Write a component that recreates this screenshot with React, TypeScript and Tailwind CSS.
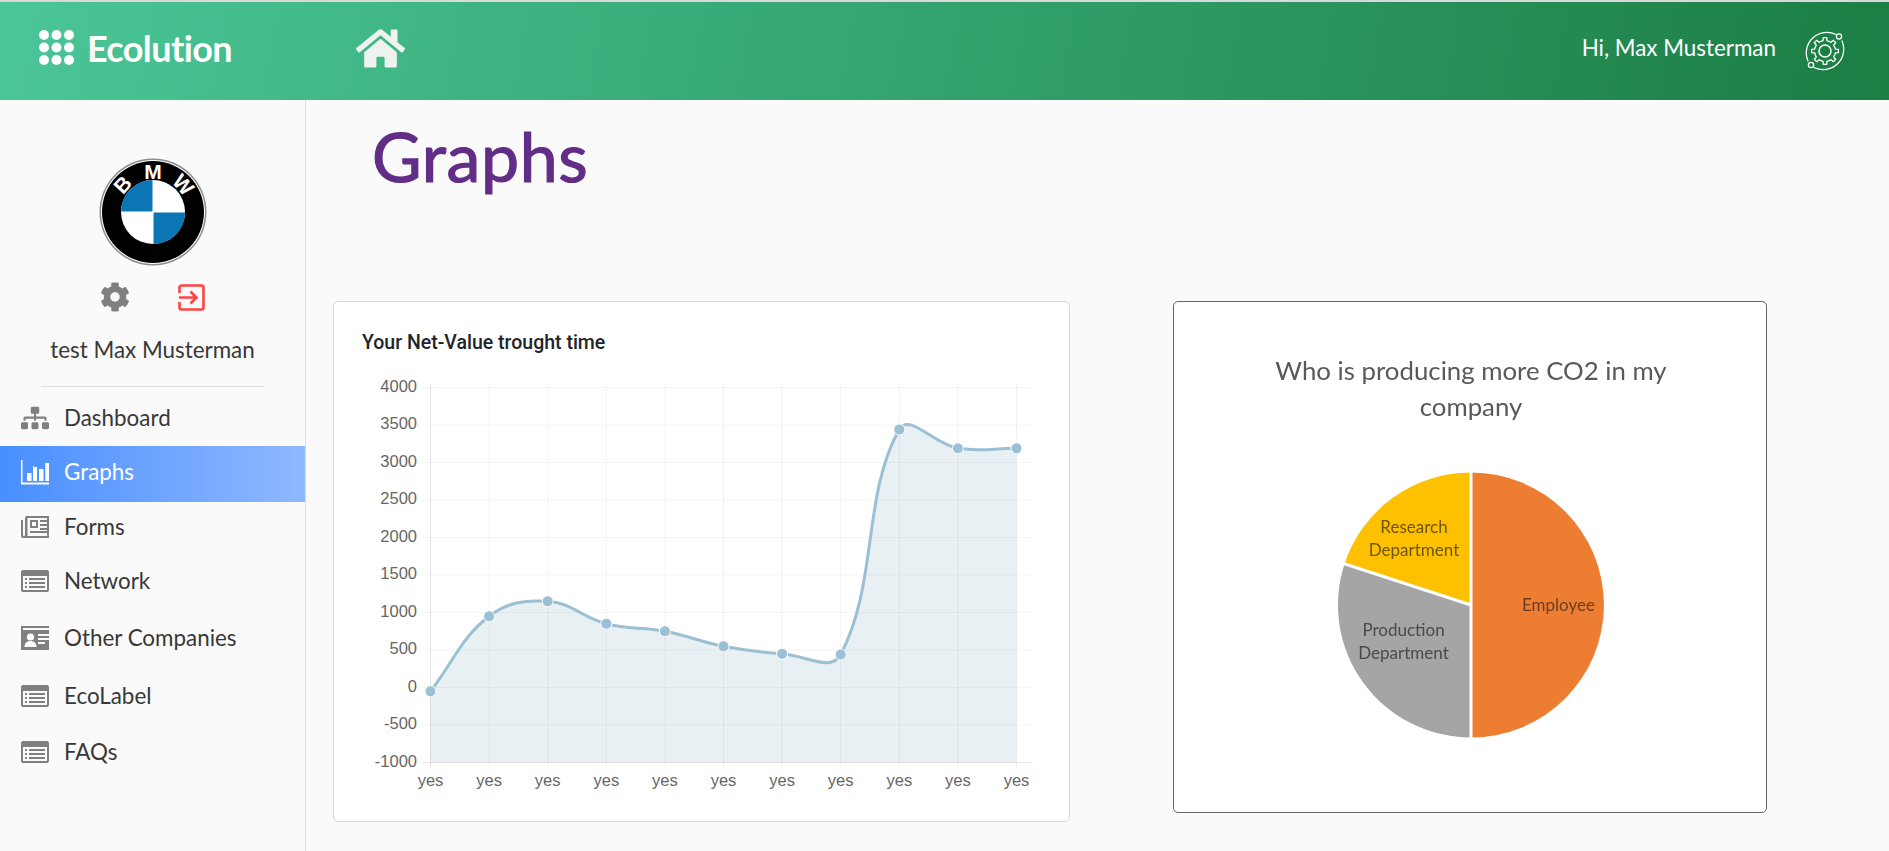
import { FaCog, FaHome, FaSitemap } from 'react-icons/fa'

const lato = { fontFamily: 'Lato, sans-serif' }

const values = [-50, 950, 1150, 850, 750, 550, 450, 440, 3440, 3190, 3190]
const ticks = [4000, 3500, 3000, 2500, 2000, 1500, 1000, 500, 0, -500, -1000]

const xAt = (i: number) => 430.5 + i * 58.6
const yAt = (v: number) => 387.5 + (4000 - v) * 0.075

// same control points a chart.js line with tension 0.4 gets
const linePath = () => {
  const pts = values.map((v, i) => ({ x: xAt(i), y: yAt(v) }))
  const ctrl = pts.map((p, i) => {
    const prev = pts[i - 1] ?? p
    const next = pts[i + 1] ?? p
    const d01 = Math.hypot(p.x - prev.x, p.y - prev.y)
    const d12 = Math.hypot(next.x - p.x, next.y - p.y)
    const total = d01 + d12 || 1
    const fa = (0.4 * d01) / total
    const fb = (0.4 * d12) / total
    return {
      px: p.x - fa * (next.x - prev.x),
      py: p.y - fa * (next.y - prev.y),
      nx: p.x + fb * (next.x - prev.x),
      ny: p.y + fb * (next.y - prev.y),
    }
  })
  let d = `M${pts[0].x} ${pts[0].y}`
  for (let i = 1; i < pts.length; i++) {
    d += ` C${ctrl[i - 1].nx} ${ctrl[i - 1].ny} ${ctrl[i].px} ${ctrl[i].py} ${pts[i].x} ${pts[i].y}`
  }
  return d
}

const gearPath = (cx: number, cy: number, outer: number, inner: number, teeth: number) => {
  const step = (Math.PI * 2) / teeth
  let d = ''
  for (let i = 0; i < teeth; i++) {
    const a = i * step
    const corners = [
      [inner, a - step * 0.5],
      [inner, a - step * 0.24],
      [outer, a - step * 0.16],
      [outer, a + step * 0.16],
      [inner, a + step * 0.24],
    ]
    corners.forEach(([r, t], j) => {
      d += `${i === 0 && j === 0 ? 'M' : 'L'}${(cx + r * Math.cos(t)).toFixed(2)} ${(cy + r * Math.sin(t)).toFixed(2)} `
    })
  }
  return d + 'Z'
}

const DotsIcon = () => (
  <svg width="35" height="35" viewBox="0 0 35 35" fill="#fff">
    {[5, 17.5, 30].map((y) =>
      [5, 17.5, 30].map((x) => <circle key={`${x}-${y}`} cx={x} cy={y} r="5" />),
    )}
  </svg>
)

const OrbitGear = () => (
  <svg width="44" height="44" viewBox="0 0 44 44" fill="none" stroke="#fff" strokeWidth="1.3">
    <path d={gearPath(22, 22, 13.5, 10.5, 8)} strokeLinejoin="round" />
    <circle cx="22" cy="22" r="6" strokeWidth="1.5" />
    <path d="M33 5.5A20.5 20.5 0 0 0 5 32" strokeLinecap="round" />
    <path d="M11 38.5A20.5 20.5 0 0 0 39 12" strokeLinecap="round" />
    <circle cx="36" cy="7.5" r="2.6" />
    <circle cx="8" cy="36" r="2.6" />
  </svg>
)

const BmwLogo = () => (
  <svg width="108" height="108" viewBox="0 0 108 108">
    <circle cx="54" cy="54" r="53.5" fill="#8c8c8c" />
    <circle cx="54" cy="54" r="52" fill="#fff" />
    <circle cx="54" cy="54" r="51" fill="#000" />
    <circle cx="54" cy="54" r="32" fill="#fff" />
    <path d="M53.5 53.5V22A31.5 31.5 0 0 0 22 53.5Z" fill="#0a76b4" />
    <path d="M54.5 54.5V86A31.5 31.5 0 0 0 86 54.5Z" fill="#0a76b4" />
    <g fill="#fff" fontSize="21" fontWeight="700" fontFamily="'Liberation Sans', sans-serif" textAnchor="middle">
      <text x="54" y="20.5" transform="rotate(-48 54 54)">B</text>
      <text x="54" y="20.5">M</text>
      <text x="54" y="20.5" transform="rotate(48 54 54)">W</text>
    </g>
  </svg>
)

const LogoutIcon = () => (
  <svg width="27" height="27" viewBox="0 0 27 27" fill="none" stroke="#ff4242" strokeWidth="2.6">
    <path d="M1.5 9V3.5a2 2 0 0 1 2-2h20a2 2 0 0 1 2 2v20a2 2 0 0 1-2 2h-20a2 2 0 0 1-2-2V18" />
    <path d="M1 13.5h17M12.5 7.5l6 6-6 6" />
  </svg>
)

const ChartIcon = () => (
  <svg width="28" height="25" viewBox="0 0 28 25" fill="#fff">
    <path d="M0 0h1.5v22.5H28V24.5H0Z" />
    <path d="M6 13h4.5v8H6ZM12 6h1v15h-1ZM12 7h4v14h-4ZM18 9h4.5v12H18ZM24.3 3H28v18h-3.7Z" />
  </svg>
)

const NewsIcon = () => (
  <svg width="28" height="22" viewBox="0 0 28 22" fill="#808080">
    <path fillRule="evenodd" d="M5 0h23v22H2a2 2 0 0 1-2-2V4h2v15.5l1 .5 1-.5V2Zm1.5 2v18H28v-.2H26V2ZM9 4h8v8H9Zm2 2v4h4V6Z" />
    <path d="M19 4h9v2h-9ZM19 8h9v2h-9ZM19 12h9v2h-9ZM9 15h19v2H9Z" />
  </svg>
)

const ListIcon = () => (
  <svg width="28" height="22" viewBox="0 0 28 22" fill="#808080">
    <path fillRule="evenodd" d="M2 0h24a2 2 0 0 1 2 2v18a2 2 0 0 1-2 2H2a2 2 0 0 1-2-2V2a2 2 0 0 1 2-2Zm0 6v14h24V6Z" />
    <path d="M4 8h2v2H4ZM8 8h16v2H8ZM4 12h2v2H4ZM8 12h16v2H8ZM4 16h2v2H4ZM8 16h16v2H8Z" />
  </svg>
)

const CardIcon = () => (
  <svg width="28" height="24" viewBox="0 0 28 24" fill="#808080">
    <path fillRule="evenodd" d="M0 0h28v2H2v2h26v20H0Zm17 8v2h11V8Zm0 4v2h11v-2Zm0 4v2h7v-2Z" />
    <circle cx="9.5" cy="11" r="3.6" fill="#fff" />
    <path d="M3.5 21c0-4 2.5-6 6-6s6 2 6 6Z" fill="#fff" />
  </svg>
)

const navItems = [
  { label: 'Dashboard', icon: <FaSitemap size={28} color="#808080" />, row: 'h-[57px]' },
  { label: 'Graphs', icon: <ChartIcon />, row: 'h-[56px] pb-1 text-white bg-gradient-to-r from-[#478eff] to-[#8fb8ff]' },
  { label: 'Forms', icon: <NewsIcon />, row: 'h-[50px]' },
  { label: 'Network', icon: <ListIcon />, row: 'h-[58px]' },
  { label: 'Other Companies', icon: <CardIcon />, row: 'h-[56px]' },
  { label: 'EcoLabel', icon: <ListIcon />, row: 'h-[60px]' },
  { label: 'FAQs', icon: <ListIcon />, row: 'h-[52px]' },
]

const NetValueChart = () => {
  const line = linePath()
  return (
    <svg width="710" height="430" viewBox="340 370 710 430" className="block">
      <path d={`${line} L${xAt(10)} ${yAt(-1000)} L${xAt(0)} ${yAt(-1000)} Z`} fill="#e9f0f4" />
      {ticks.map((t) => (
        <line key={t} x1="423" x2="1032" y1={yAt(t)} y2={yAt(t)} stroke="#000" strokeOpacity={t === -1000 ? 0.1 : 0.04} strokeWidth="1" />
      ))}
      {values.map((_, i) => (
        <line key={i} x1={xAt(i)} x2={xAt(i)} y1="384" y2="768" stroke="#000" strokeOpacity={i === 0 ? 0.1 : 0.05} strokeWidth="1" />
      ))}
      <path d={line} fill="none" stroke="#9bbfd3" strokeWidth="3" />
      {values.map((v, i) => (
        <circle key={i} cx={xAt(i)} cy={yAt(v)} r="5.5" fill="#9bbfd3" stroke="#fff" strokeWidth="1" />
      ))}
      <g fill="#666" fontSize="16.5" fontFamily="'Liberation Sans', sans-serif">
        {ticks.map((t) => (
          <text key={t} x="417" y={yAt(t) + 4} textAnchor="end">
            {t}
          </text>
        ))}
        {values.map((_, i) => (
          <text key={i} x={xAt(i)} y="786" textAnchor="middle">
            yes
          </text>
        ))}
      </g>
    </svg>
  )
}

const Co2Pie = () => (
  <svg width="592" height="510" viewBox="1174 302 592 510" className="block blur-[0.4px]" style={lato}>
    <g fill="#595959" fontSize="25.8" textAnchor="middle">
      <text x="1471" y="380">Who is producing more CO2 in my</text>
      <text x="1471" y="416">company</text>
    </g>
    <path d="M1471 472.5A133 132.5 0 0 1 1471 737.5Z" fill="#ed7d31" />
    <path d="M1471 605L1471 737.5A133 132.5 0 0 1 1344.5 564Z" fill="#a5a5a5" />
    <path d="M1471 605L1344.5 564A133 132.5 0 0 1 1471 472.5Z" fill="#ffc000" />
    <path d="M1471 470V740M1471 605L1342 563" stroke="#fff" strokeWidth="3" fill="none" />
    <g fontSize="17" textAnchor="middle">
      <g fill="#6e5600">
        <text x="1414" y="533">Research</text>
        <text x="1414" y="556">Department</text>
      </g>
      <g fill="#4a4a4a">
        <text x="1403.5" y="636">Production</text>
        <text x="1403.5" y="659">Department</text>
      </g>
      <text x="1558.5" y="611" fill="#6b3c1f">Employee</text>
    </g>
  </svg>
)

export default function App() {
  return (
    <div className="w-full h-[851px] overflow-hidden bg-[#fafafa] text-[#383838]" style={lato}>
      <div className="h-[2px] bg-[#d9d9d9]" />
      <header className="h-[98px] flex items-center text-white bg-[linear-gradient(100deg,#4bc698,#1b7e43)]">
        <div className="w-[356px] pl-[39px] flex items-center gap-[13px] -mt-[7px]">
          <DotsIcon />
          <span className="text-[36px] font-bold tracking-[-0.6px]">Ecolution</span>
        </div>
        <FaHome size={49} color="#eef3f0" className="-mt-[5px]" />
        <div className="ml-auto pr-[42px] flex items-center gap-[27px]">
          <span className="text-[22.4px] -mt-[7px]">Hi, Max Musterman</span>
          <OrbitGear />
        </div>
      </header>
      <div className="flex h-[751px]">
        <aside className="w-[306px] shrink-0 border-r border-[#dedede] flex flex-col">
          <div className="flex flex-col items-center pt-[58px]">
            <BmwLogo />
            <div className="flex items-center gap-12 mt-[17px] h-7">
              <FaCog size={30} color="#808080" />
              <LogoutIcon />
            </div>
            <p className="text-[22.4px] mt-[25px] leading-7">test Max Musterman</p>
            <div className="w-[223px] h-px bg-[#dedede] mt-[22px]" />
          </div>
          <nav className="mt-[2px]">
            {navItems.map((item) => (
              <div key={item.label} className={`flex items-center pl-[21px] gap-[15px] text-[22.4px] ${item.row}`}>
                <span className="w-7 flex justify-center">{item.icon}</span>
                <span>{item.label}</span>
              </div>
            ))}
          </nav>
        </aside>
        <main className="flex-1 pl-[27px]">
          <h1 className="text-[68px] leading-[80px] tracking-[0.6px] [-webkit-text-stroke:1.2px_#622d86] text-[#622d86] pl-[39px] pt-[16px] h-[201px]">Graphs</h1>
          <div className="flex items-start gap-[103px]">
            <section className="w-[737px] h-[521px] bg-white border border-[#d6d6e0] rounded-[5px]">
              <h2 className="pl-[28px] pt-[26px] h-[68px] text-[19.5px] font-medium text-[#212529]" style={{ fontFamily: 'Roboto, sans-serif' }}>
                Your Net-Value trought time
              </h2>
              <div className="pl-[6px]">
                <NetValueChart />
              </div>
            </section>
            <section className="w-[594px] h-[512px] bg-white border border-[#666] rounded-[5px]">
              <Co2Pie />
            </section>
          </div>
        </main>
      </div>
    </div>
  )
}
